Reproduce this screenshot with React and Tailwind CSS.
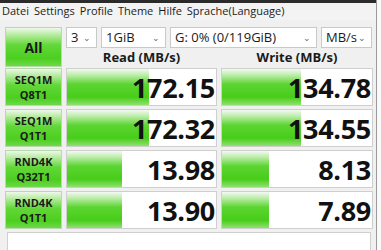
import React from "react";

const rows = [
  { a: "SEQ1M", b: "Q8T1", read: "172.15", write: "134.78", rw: "w-[82px]", ww: "w-[79px]" },
  { a: "SEQ1M", b: "Q1T1", read: "172.32", write: "134.55", rw: "w-[82px]", ww: "w-[79px]" },
  { a: "RND4K", b: "Q32T1", read: "13.98", write: "8.13", rw: "w-[55px]", ww: "w-[47px]" },
  { a: "RND4K", b: "Q1T1", read: "13.90", write: "7.89", rw: "w-[55px]", ww: "w-[47px]" },
];

const greenBox = "bg-[linear-gradient(to_bottom,#eef8ea_0%,#b0ea98_20%,#62d738_45%,#4ccf1f_80%,#6fd84a_100%)]";
const bar = "bg-[linear-gradient(to_bottom,#f4f9f2_0%,#c0eeae_16%,#5cd532_42%,#47cd19_78%,#8fe070_100%)]";

function Select({ w, children }) {
  return (
    <div className={`${w} h-[21px] bg-white border border-[#c9c9c9] flex items-center justify-between pl-[4px] pr-[5px] text-[13px] text-[#1a1a1a]`}>
      <span>{children}</span>
      <span className="text-[9px] text-[#666]">⌄</span>
    </div>
  );
}

function Cell({ value, width }) {
  return (
    <div className="relative h-full bg-white border border-[#cfcfcf] overflow-hidden">
      <div className={`absolute left-0 top-0 bottom-0 ${width} ${bar}`}></div>
      <div className="relative h-full flex items-center justify-end pr-[1px] text-[27px] font-bold leading-none text-[#111] tracking-[-0.3px]">
        {value}
      </div>
    </div>
  );
}

export default function App() {
  return (
    <div className="w-[381px] h-[250px] bg-[#fafafa] overflow-hidden" style={{ fontFamily: "'Open Sans', 'Noto Sans', sans-serif" }}>
      <div className="w-[377px] h-full bg-[#eff0ef] border-r border-[#9a9a9a]">
        <div className="h-[3px] bg-[#2b2b2b]"></div>
        <div className="h-[17px] flex items-center gap-[5px] pl-[2px] text-[11px] text-[#1c1c1c] bg-[#f3f3f3]">
          <span>Datei</span>
          <span>Settings</span>
          <span>Profile</span>
          <span>Theme</span>
          <span>Hilfe</span>
          <span>Sprache(Language)</span>
        </div>
        <div className="pl-[5px] pt-[7px]">
          <div className="flex gap-[4px] h-[40px]">
            <div className={`w-[57px] h-[40px] border border-[#b8d9ac] flex items-center justify-center text-[14px] font-bold text-[#1a1a1a] ${greenBox}`}>
              All
            </div>
            <div className="flex flex-col">
              <div className="flex gap-[4px]">
                <Select w="w-[31px]">3</Select>
                <Select w="w-[65px]">1GiB</Select>
                <Select w="w-[147px]">G: 0% (0/119GiB)</Select>
                <Select w="w-[51px]">MB/s</Select>
              </div>
              <div className="flex h-[19px] items-center text-[13px] font-bold text-[#1a1a1a]">
                <div className="w-[151px] text-center">Read (MB/s)</div>
                <div className="w-[4px]"></div>
                <div className="w-[152px] text-center">Write (MB/s)</div>
              </div>
            </div>
          </div>
          <div className="mt-[1px] flex flex-col gap-[3px]">
            {rows.map((r, i) => (
              <div key={i} className="grid grid-cols-[57px_151px_152px] gap-x-[4px] h-[38px]">
                <div className={`border border-[#b8d9ac] flex flex-col items-center justify-center text-[11px] font-bold leading-[15px] text-[#1a1a1a] ${greenBox}`}>
                  <span>{r.a}</span>
                  <span>{r.b}</span>
                </div>
                <Cell value={r.read} width={r.rw} />
                <Cell value={r.write} width={r.ww} />
              </div>
            ))}
          </div>
          <div className="mt-[3px] ml-[2px] w-[364px] h-[30px] bg-white border border-[#cfcfcf]"></div>
        </div>
      </div>
    </div>
  );
}
